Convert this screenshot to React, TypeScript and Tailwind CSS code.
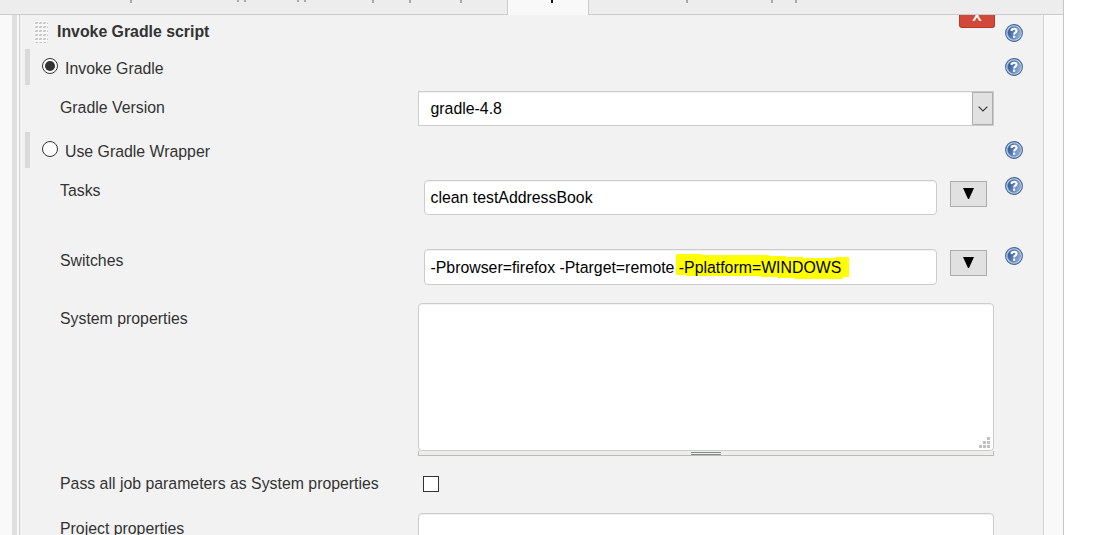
import type { ReactNode } from "react";

function Help({ className = "" }: { className?: string }) {
  return (
    <svg className={`h-[18px] w-[18px] shrink-0 ${className}`} viewBox="0 0 18 18" role="img" aria-label="Help">
      <defs>
        <linearGradient id="disc" x1="0" y1="0" x2="1" y2="0.3">
          <stop offset="0" stopColor="#23508f" />
          <stop offset="1" stopColor="#8ba7d2" />
        </linearGradient>
      </defs>
      <circle cx="9" cy="9" r="8.4" fill="#c3d2e8" stroke="#3f659f" strokeWidth="1.1" />
      <circle cx="9" cy="9" r="6.4" fill="url(#disc)" stroke="#6484b5" strokeWidth="0.5" />
      <path d="M6.7 7V5.5Q8 4.6 9.4 4.7Q11.6 4.9 11.5 6.8Q11.4 7.9 10.2 8.6Q9.2 9.2 9.2 10.4" fill="none" stroke="#fff" strokeWidth="2.1" />
      <rect x="8" y="11.6" width="2.2" height="2.2" fill="#fff" />
    </svg>
  );
}

function Row({ height, label, labelTop, help, children }: {
  height: string;
  label: string;
  labelTop: string;
  help?: string;
  children: ReactNode;
}) {
  return (
    <div className={`flex shrink-0 items-start pl-10 ${height}`}>
      <div className={`w-[358px] shrink-0 leading-[18px] ${labelTop}`}>{label}</div>
      <div className="w-[587px] shrink-0">{children}</div>
      {help && <Help className={help} />}
    </div>
  );
}

function RadioRow({ label, checked = false }: { label: string; checked?: boolean }) {
  return (
    <div className="flex h-9 shrink-0 items-start pl-[5px]">
      <div className="h-9 w-[5px] bg-[#d9d9d9]" />
      <div className="mt-[9px] ml-3 flex h-4 w-4 items-center justify-center rounded-full border border-[#333] bg-white">
        {checked && <div className="h-[10px] w-[10px] rounded-full bg-[#333]" />}
      </div>
      <div className="ml-[7px] w-[940px] pt-[11px] leading-[18px]">{label}</div>
      <Help className="mt-[9px]" />
    </div>
  );
}

function Expand({ className }: { className: string }) {
  return (
    <button className={`ml-[13px] flex h-[26px] w-[37px] items-start justify-center border border-[#adadad] bg-[#e1e1e1] ${className}`}>
      <svg className="mt-[6px] h-[11px] w-[11px]" viewBox="0 0 11 11"><path d="M0 0H11L6 11H5Z" fill="#000" /></svg>
    </button>
  );
}

const tails = [130, 237, 244, 297, 304, 372, 409, 460, 686, 771, 795];

export default function App() {
  return (
    <div className="h-[535px] w-[1112px] overflow-hidden bg-white font-['Liberation_Sans',Arial,sans-serif] text-[15.85px] text-[#333]">
      <div className="flex h-full w-[1064px] flex-col border-r border-[#c6c6c6] bg-[#f9f9f9]">
        <div className="relative flex h-[15px] shrink-0 bg-[#ededed]">
          <div className="w-[507px] border-b border-[#ccc]" />
          <div className="w-[82px] border-x border-[#ccc] bg-[#f9f9f9]" />
          <div className="flex-1 border-b border-[#ccc]" />
          <svg className="absolute top-0 left-0 h-[3px] w-[1063px]" viewBox="0 0 1063 3">
            {tails.map((x) => <rect key={x} x={x} y="0" width="2" height={x === 237 || x === 244 || x === 297 || x === 304 ? 2 : 3} fill="#aaa7a8" />)}
            <rect x="551" y="0" width="2" height="3" fill="#111" />
          </svg>
        </div>

        <div className="flex min-h-0 flex-1 pl-3">
          <div className="w-[5px] shrink-0 bg-[#e0e0e0]" />
          <div className="ml-[2px] flex w-[1025px] shrink-0 flex-col overflow-hidden border-x border-[#d3d3d3] bg-[#f2f2f2]">
            <div className="flex h-[34px] shrink-0 items-start pl-[14px]">
              <svg className="mt-[6px] h-[22px] w-[15px]" viewBox="0 0 15 22">
                <defs>
                  <pattern id="grip" width="4" height="4" patternUnits="userSpaceOnUse">
                    <rect width="4" height="4" fill="#f8f8f8" />
                    <rect x="1" y="1" width="3" height="2" fill="#dcdcdc" />
                    <rect x="2" y="1" width="2" height="1" fill="#c6c6c6" />
                    <rect x="1" y="2" width="2" height="1" fill="#c6c6c6" />
                  </pattern>
                </defs>
                <rect width="14" height="22" fill="url(#grip)" />
              </svg>
              <div className="ml-2 w-[902px] pt-[8px] font-bold leading-[18px]">Invoke Gradle script</div>
              <button className="flex h-[13px] w-9 items-end justify-center overflow-hidden rounded-b-[3px] border border-t-0 border-[#b73a2c] bg-[#d24939] text-[14px] font-bold leading-[17px] text-white">
                <span className="pb-[2px]">X</span>
              </button>
              <Help className="mt-[9px] ml-[10px]" />
            </div>

            <RadioRow label="Invoke Gradle" checked />

            <Row height="h-[47px]" label="Gradle Version" labelTop="pt-[14px]">
              <div className="mt-[6px] flex h-[35px] w-[576px] border border-[#ccc] bg-white text-black shadow-[inset_0_1px_1px_rgba(0,0,0,0.06)]">
                <div className="flex-1 pt-[8px] pl-[11.5px] leading-[18px]">gradle-4.8</div>
                <div className="flex w-[21px] items-center justify-center border border-[#adadad] bg-[#e1e1e1]">
                  <svg className="h-[6px] w-[10px]" viewBox="0 0 10 6"><path d="M.6.6L5 5L9.4.6" fill="none" stroke="#333" strokeWidth="1.1" /></svg>
                </div>
              </div>
            </Row>

            <RadioRow label="Use Gradle Wrapper" />

            <Row height="h-[70px]" label="Tasks" labelTop="pt-[14px]" help="mt-[9px]">
              <div className="flex pt-3 pl-[6px]">
                <div className="h-[35px] w-[513px] rounded-[4px] border border-[#ccc] bg-white pt-[8px] pl-[5.5px] leading-[18px] text-black shadow-[inset_0_1px_1px_rgba(0,0,0,0.06)]">clean testAddressBook</div>
                <Expand className="mt-[1px]" />
              </div>
            </Row>

            <Row height="h-[60px]" label="Switches" labelTop="pt-[14px]" help="mt-[9px]">
              <div className="flex pt-[11px] pl-[6px]">
                <div className="relative isolate h-9 w-[513px] rounded-[4px] border border-[#ccc] bg-white pt-[9px] pl-[5.5px] leading-[18px] text-black shadow-[inset_0_1px_1px_rgba(0,0,0,0.06)]">
                  <svg className="absolute top-[4px] left-[251px] -z-10 h-[26px] w-[174px]" viewBox="0 0 174 26">
                    <path d="M0 0H26V1H93V2H110V3H127V4H159V3H173V23H167V25H119V24H102V23H85V22H10V21H0Z" fill="#ff0" />
                  </svg>
                  <span className="whitespace-pre">-Pbrowser=firefox -Ptarget=remote -Pplatform=WINDOWS</span>
                </div>
                <Expand className="mt-[1px]" />
              </div>
            </Row>

            <Row height="h-[166px]" label="System properties" labelTop="pt-[12px]">
              <div className="w-[576px] pt-[5px]">
                <div className="flex h-[148px] items-end justify-end rounded-[4px] border border-[#ccc] bg-white pr-[3px] pb-[2px] shadow-[inset_0_1px_1px_rgba(0,0,0,0.06)]">
                  <svg className="h-[11px] w-[11px]" viewBox="0 0 11 11">
                    <path d="M8 0h3v3h-3zM4 4h3v3h-3zM8 4h3v3h-3zM0 8h3v3h-3zM4 8h3v3h-3zM8 8h3v3h-3z" fill="#bfbfbf" />
                  </svg>
                </div>
                <div className="flex h-[5px] justify-center border border-t-0 border-[#babdb6] bg-[#eeeeec]">
                  <div className="mt-[1px] h-[3px] w-[30px] border-y border-[#888a85]" />
                </div>
              </div>
            </Row>

            <Row height="h-[44px]" label="Pass all job parameters as System properties" labelTop="pt-[11px]">
              <div className="mt-3 ml-[5px] h-4 w-4 border border-[#333] bg-white" />
            </Row>

            <Row height="h-[60px]" label="Project properties" labelTop="pt-[12px]">
              <div className="mt-[5px] h-[60px] w-[576px] rounded-[4px] border border-[#ccc] bg-white shadow-[inset_0_1px_1px_rgba(0,0,0,0.06)]" />
            </Row>
          </div>
        </div>
      </div>
    </div>
  );
}
